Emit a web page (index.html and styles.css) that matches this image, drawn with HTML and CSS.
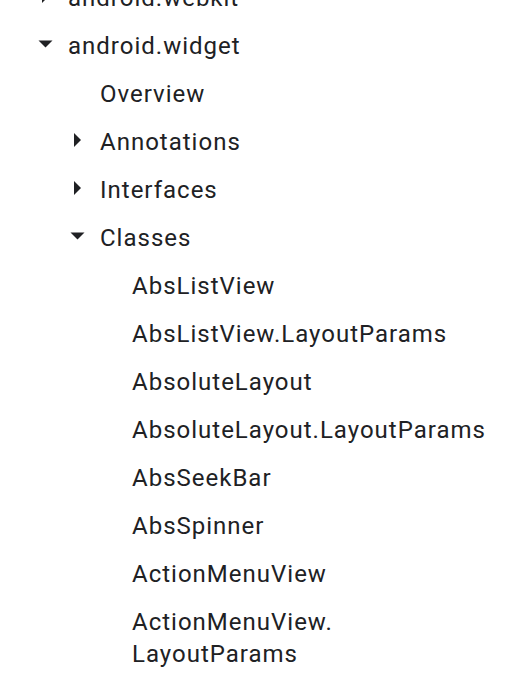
FILE: index.html
```html
<!DOCTYPE html>
<html>
<head>
<meta charset="utf-8">
<link rel="stylesheet" href="styles.css">
</head>
<body>
<ul class="tree">
  <li class="row lvl1"><span class="slot"><svg class="arr" viewBox="0 0 20 20" width="20" height="20"><polygon points="6,3 13,10 6,17"/></svg></span><span class="label">android.webkit</span></li>
  <li class="row lvl1"><span class="slot"><svg class="arr" viewBox="0 0 20 20" width="20" height="20"><polygon points="2.5,6.5 16.5,6.5 9.5,13.5"/></svg></span><span class="label">android.widget</span></li>
  <li class="row lvl2"><span class="slot"></span><span class="label">Overview</span></li>
  <li class="row lvl2"><span class="slot"><svg class="arr" viewBox="0 0 20 20" width="20" height="20"><polygon points="6,3 13,10 6,17"/></svg></span><span class="label">Annotations</span></li>
  <li class="row lvl2"><span class="slot"><svg class="arr" viewBox="0 0 20 20" width="20" height="20"><polygon points="6,3 13,10 6,17"/></svg></span><span class="label">Interfaces</span></li>
  <li class="row lvl2"><span class="slot"><svg class="arr" viewBox="0 0 20 20" width="20" height="20"><polygon points="2.5,6.5 16.5,6.5 9.5,13.5"/></svg></span><span class="label">Classes</span></li>
  <li class="row lvl3"><span class="slot"></span><span class="label">AbsListView</span></li>
  <li class="row lvl3"><span class="slot"></span><span class="label">AbsListView.LayoutParams</span></li>
  <li class="row lvl3"><span class="slot"></span><span class="label">AbsoluteLayout</span></li>
  <li class="row lvl3"><span class="slot"></span><span class="label">AbsoluteLayout.LayoutParams</span></li>
  <li class="row lvl3"><span class="slot"></span><span class="label">AbsSeekBar</span></li>
  <li class="row lvl3"><span class="slot"></span><span class="label">AbsSpinner</span></li>
  <li class="row lvl3"><span class="slot"></span><span class="label">ActionMenuView</span></li>
  <li class="row lvl3"><span class="slot"></span><span class="label">ActionMenuView.<wbr>LayoutParams</span></li>
</ul>
</body>
</html>
```
FILE: styles.css
```css
html, body {
  margin: 0;
  padding: 0;
  background: #ffffff;
}
body {
  font-family: Roboto, "Noto Sans", sans-serif;
  color: #202124;
  font-size: 24px;
  letter-spacing: 1px;
  overflow: hidden;
}
.tree {
  list-style: none;
  margin: -26px 0 0 0;
  padding: 0 16px 0 0;
}
.row {
  display: flex;
  align-items: flex-start;
  padding: 8px 0;
  line-height: 32px;
}
.lvl1 { padding-left: 36px; }
.lvl2 { padding-left: 68px; }
.lvl3 { padding-left: 100px; }
.slot {
  flex: 0 0 32px;
  width: 32px;
  height: 32px;
  display: flex;
  align-items: center;
}
.arr {
  display: block;
  fill: #202124;
  margin-bottom: 4px;
}
.label {
  flex: 1 1 auto;
  min-width: 0;
}
```
